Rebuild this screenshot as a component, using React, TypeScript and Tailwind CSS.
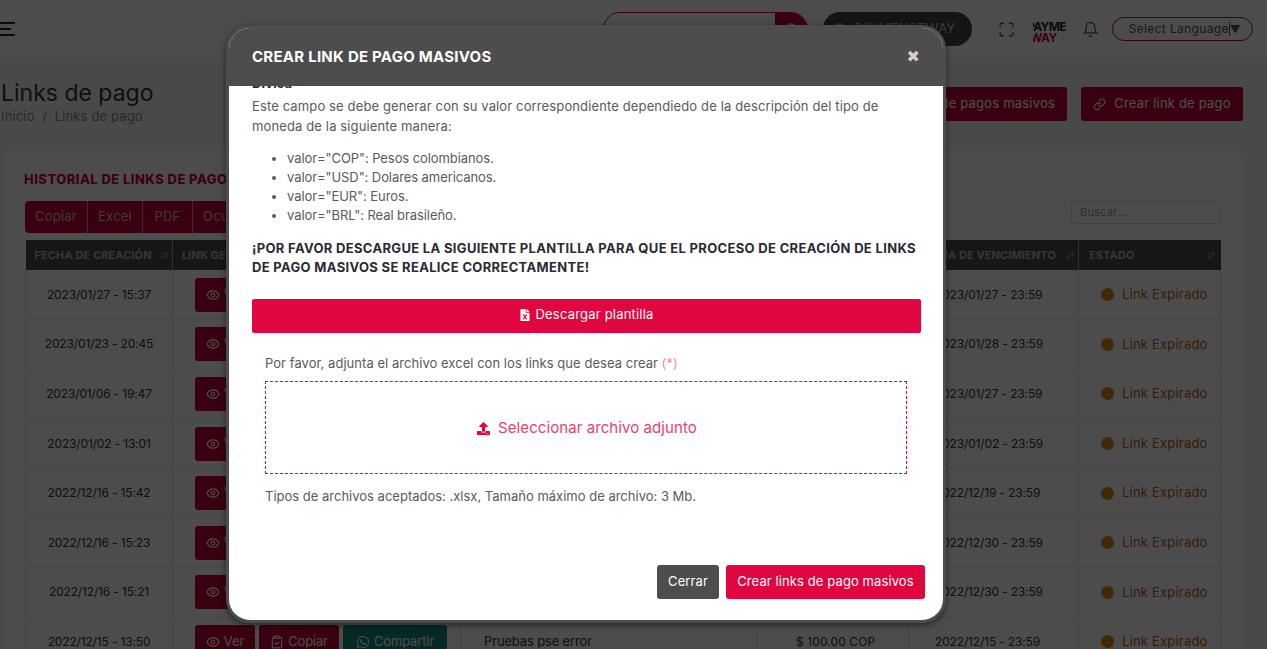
import { FaFileExcel, FaUpload, FaWhatsapp } from "react-icons/fa";
import { LuArrowDownUp, LuBell, LuClipboardCheck, LuEye, LuLink, LuMaximize, LuSearch, LuShoppingBag } from "react-icons/lu";

const rows = [
  ["2023/01/27 - 15:37", "2023/01/27 - 23:59"],
  ["2023/01/23 - 20:45", "2023/01/28 - 23:59"],
  ["2023/01/06 - 19:47", "2023/01/27 - 23:59"],
  ["2023/01/02 - 13:01", "2023/01/02 - 23:59"],
  ["2022/12/16 - 15:42", "2022/12/19 - 23:59"],
  ["2022/12/16 - 15:23", "2022/12/30 - 23:59"],
  ["2022/12/16 - 15:21", "2022/12/30 - 23:59"],
  ["2022/12/15 - 13:50", "2022/12/15 - 23:59"],
];

const headers = ["FECHA DE CREACIÓN", "LINK GENERADO", "DESCRIPCIÓN", "MONTO", "FECHA DE VENCIMIENTO", "ESTADO"];

function Topbar() {
  return (
    <header className="h-[58px] bg-white flex items-center">
      <div className="flex flex-col gap-[4px] w-[15px]">
        <span className="h-[2px] w-full bg-[#222]" />
        <span className="h-[2px] w-[11px] bg-[#222]" />
        <span className="h-[2px] w-full bg-[#222]" />
      </div>
      <div className="ml-[588px] flex h-[34px] w-[205px] rounded-full border border-[#c00538] overflow-hidden">
        <div className="flex-1" />
        <div className="w-[32px] bg-[#c00538] flex items-center justify-center text-white">
          <LuSearch size={15} />
        </div>
      </div>
      <div className="ml-[15px] flex items-center gap-2 h-[34px] w-[149px] rounded-full bg-[#444] pl-[10px] text-[13px] text-white/70">
        <LuShoppingBag size={13} />
        PAYMENSTWAY
      </div>
      <LuMaximize size={17} className="ml-[26px] text-[#333]" strokeWidth={1.5} />
      <div className="ml-[18px] mt-[5px] w-[33px] overflow-hidden flex flex-col text-[12px] font-bold leading-[11px] tracking-tighter">
        <span className="-ml-[6px] whitespace-nowrap text-[#222]">PAYMENT</span>
        <span className="-ml-[3px] whitespace-nowrap text-[#e0063f]">WAY</span>
      </div>
      <LuBell size={17} className="ml-[16px] text-[#333]" strokeWidth={1.5} />
      <div className="ml-[13px] flex items-center justify-center h-[24px] w-[141px] rounded-full border border-[#c00538] pl-[5px] text-[12px] tracking-[0.35px] text-[#555]">
        Select Language<span className="border-l border-[#555] text-[11px] leading-[14px]">▼</span>
      </div>
    </header>
  );
}

function LinkActions() {
  return (
    <div className="flex gap-1 text-[13px] text-white">
      <span className="flex items-center gap-1 h-[34px] w-[60px] justify-center rounded-[3px] bg-[#c00538]">
        <LuEye size={14} /> Ver
      </span>
      <span className="flex items-center gap-1 h-[34px] w-[80px] justify-center rounded-[3px] bg-[#c00538]">
        <LuClipboardCheck size={14} /> Copiar
      </span>
      <span className="flex items-center gap-1 h-[34px] w-[104px] justify-center rounded-[3px] bg-[#128c7e]">
        <FaWhatsapp size={14} /> Compartir
      </span>
    </div>
  );
}

function HistoryTable() {
  return (
    <table className="w-[1195px] table-fixed border-collapse text-[12px] tracking-[-0.15px] text-[#333]">
      <colgroup>
        <col className="w-[147px]" />
        <col className="w-[288px]" />
        <col className="w-[297px]" />
        <col className="w-[151px]" />
        <col className="w-[170px]" />
        <col className="w-[142px]" />
      </colgroup>
      <thead>
        <tr className="h-[30px] bg-[#4c4c4c] text-[11px] font-extrabold tracking-[0.1px] text-white/60 text-left">
          {headers.map((label, i) => (
            <th key={label} className={i < 5 ? "pl-[9px] pr-[3px] border-r border-white/50" : "pl-[10px] pr-[6px]"}>
              <span className="flex items-center justify-between whitespace-nowrap">
                {label}
                <LuArrowDownUp size={9} strokeWidth={3} className="shrink-0 opacity-50" />
              </span>
            </th>
          ))}
        </tr>
      </thead>
      <tbody>
        {rows.map(([created, expires]) => (
          <tr key={created} className="h-[49.6px] border-b border-[#e6e6e6]">
            <td className="border-x border-[#e6e6e6] text-center">{created}</td>
            <td className="border-r border-[#e6e6e6] pl-[22px]">
              <LinkActions />
            </td>
            <td className="border-r border-[#e6e6e6] pl-[23px] text-[13px]">Pruebas pse error</td>
            <td className="border-r border-[#e6e6e6] pl-[38px] tracking-[0.1px]">$ 100.00 COP</td>
            <td className="border-r border-[#e6e6e6] pl-[26px]">{expires}</td>
            <td className="border-r border-[#e6e6e6] pl-[22px]">
              <span className="flex items-center gap-2 text-[13px] tracking-[0.2px] text-[#b8611c]">
                <span className="w-[13px] h-[13px] rounded-full bg-[#d98a17]" />
                Link Expirado
              </span>
            </td>
          </tr>
        ))}
      </tbody>
    </table>
  );
}

function Page() {
  return (
    <div className="h-full bg-[#f4f5f7] overflow-hidden">
      <Topbar />
      <main className="pl-px pr-[24px]">
        <div className="flex items-start justify-between pt-[21px] h-[92px]">
          <div>
            <h1 className="text-[23px] leading-[28px] tracking-normal text-[#333]">Links de pago</h1>
            <p className="text-[13px] leading-[18px] tracking-[0.15px] text-[#888]">Inicio &nbsp;/&nbsp; Links de pago</p>
          </div>
          <div className="flex gap-[14px] pt-[8px] text-[13px] text-white">
            <span className="flex items-center h-[34px] px-3 rounded-[3px] bg-[#c00538]">Crear links de pagos masivos</span>
            <span className="flex items-center gap-2 h-[34px] w-[162px] justify-center rounded-[3px] bg-[#c00538]">
              <LuLink size={13} /> Crear link de pago
            </span>
          </div>
        </div>
        <section className="ml-[2px] rounded-[10px] bg-white pl-[22px] pr-[23px] pt-[21px]">
          <h2 className="-ml-px text-[13px] leading-[16px] font-extrabold tracking-[0.45px] text-[#d0063c]">HISTORIAL DE LINKS DE PAGO</h2>
          <div className="flex justify-between items-start mt-[14px] mb-[7px]">
            <div className="flex h-[32px] rounded-[4px] overflow-hidden bg-[#c00538] text-[13px] text-white/70">
              <span className="w-[63px] flex items-center justify-center border-r border-white/50">Copiar</span>
              <span className="w-[55px] flex items-center justify-center border-r border-white/50">Excel</span>
              <span className="w-[50px] flex items-center justify-center border-r border-white/50">PDF</span>
              <span className="w-[110px] flex items-center pl-[10px]">Ocultar</span>
            </div>
            <div className="w-[149px] h-[23px] rounded-[3px] border border-[#e0e0e0] text-[11px] leading-[21px] pl-2 text-[#999]">Buscar...</div>
          </div>
          <HistoryTable />
        </section>
      </main>
    </div>
  );
}

function Modal() {
  return (
    <div className="absolute inset-0 bg-black/70 pt-[25px]">
      <div className="ml-[226px] w-[720px] h-[598px] flex flex-col overflow-hidden rounded-[24px] border-[3px] border-[#4d4d4d] bg-white shadow-[0_2px_6px_rgba(0,0,0,0.5)]">
        <div className="h-[58px] shrink-0 bg-[#4d4d4d] flex items-center justify-between pl-[23px] pr-[23px]">
          <h3 className="text-[15px] font-bold tracking-[0.25px] text-white">CREAR LINK DE PAGO MASIVOS</h3>
          <span className="text-[16px] leading-none text-[#cfcfcf] [font-family:'DejaVu_Sans',sans-serif]">✖</span>
        </div>
        <div className="flex-1 flex flex-col overflow-hidden text-[13px] text-[#5a5a5a]">
          <div className="h-[7px] pl-[23px] overflow-hidden">
            <p className="-mt-[12px] font-bold leading-[19px] text-[#2a2a35]">Divisa</p>
          </div>
          <div className="pl-[23px] pr-[22px]">
            <p className="leading-[20px] pt-[3px] tracking-[0.13px]">
              Este campo se debe generar con su valor correspondiente dependiedo de la descripción del tipo de moneda de la siguiente manera:
            </p>
            <ul className="list-disc pl-[35px] mt-[13px] leading-[19px] tracking-[-0.08px]">
              <li>valor="COP": Pesos colombianos.</li>
              <li>valor="USD": Dolares americanos.</li>
              <li>valor="EUR": Euros.</li>
              <li>valor="BRL": Real brasileño.</li>
            </ul>
            <p className="mt-[14px] font-bold leading-[19px] tracking-[0.33px] text-[#2a2a35]">
              ¡POR FAVOR DESCARGUE LA SIGUIENTE PLANTILLA PARA QUE EL PROCESO DE CREACIÓN DE LINKS DE PAGO MASIVOS SE REALICE CORRECTAMENTE!
            </p>
            <button className="mt-[22px] pb-[2px] w-[669px] h-[34px] flex items-center justify-center gap-1 rounded-[2px] bg-[#e0063f] text-[13px] text-white">
              <FaFileExcel size={12} /> Descargar plantilla
            </button>
            <div className="pl-[13px]">
              <p className="mt-[20px] leading-[20px] tracking-[0.04px]">
                Por favor, adjunta el archivo excel con los links que desea crear <span className="text-[#f48aa6]">(*)</span>
              </p>
              <div className="mt-[8px] pt-px pl-[2px] w-[642px] h-[93px] border border-dashed border-[#e0063f] flex items-center justify-center gap-2 text-[15px] tracking-[0.08px] text-[#ea3f6e]">
                <FaUpload size={13} className="text-[#e0063f]" /> Seleccionar archivo adjunto
              </div>
              <p className="mt-[12px] leading-[20px] tracking-normal">Tipos de archivos aceptados: .xlsx, Tamaño máximo de archivo: 3 Mb.</p>
            </div>
          </div>
          <div className="mt-auto mb-[21px] flex justify-end gap-[7px] pr-[18px] tracking-[0.1px] text-white">
            <button className="h-[34px] w-[62px] rounded-[3px] bg-[#4d4d4d]">Cerrar</button>
            <button className="h-[34px] w-[199px] rounded-[3px] bg-[#e0063f]">Crear links de pago masivos</button>
          </div>
        </div>
      </div>
    </div>
  );
}

export default function App() {
  return (
    <div className="relative h-screen overflow-hidden font-['Inter',sans-serif] tracking-[0.2px]">
      <Page />
      <Modal />
    </div>
  );
}
